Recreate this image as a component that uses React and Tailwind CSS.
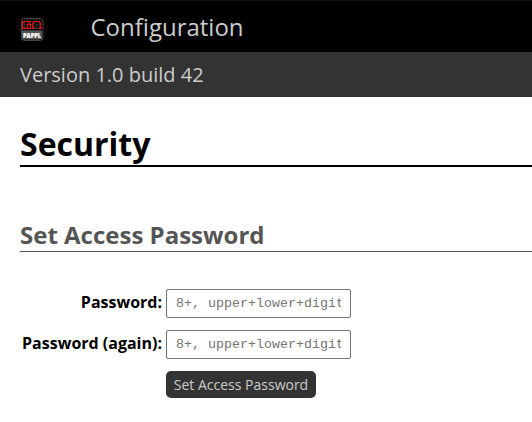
export default function App() {
  return (
    <div className="h-[422px] w-[532px] overflow-hidden bg-white font-['Open_Sans','Noto_Sans',sans-serif] text-black">
      <header className="flex h-[52px] items-center border-t border-[#111] bg-black pl-5 text-[#ccc]">
        <svg className="mt-[7px] size-6" viewBox="0 0 24 24">
          <rect x="1.5" y="0.5" width="21.5" height="22" rx="3" fill="#000" stroke="#555" strokeWidth="0.8" />
          <path d="M4.5 0v23M7.5 0v23M10.5 0v23M13.5 0v23M16.5 0v23M19.5 0v23M1 3.5h22M1 6.5h22M1 9.5h22" stroke="#444" strokeWidth="0.5" />
          <path d="M2.5 11V3M2.5 4.5h3M5.5 3.5h5M9.5 3.5v3M2 10.5h8.5v-4h-3v4M12.5 10.5v-5l2-2h4l2 2v5M12 10.5h3M18 10.5h4" fill="none" stroke="#f00" strokeWidth="1.1" />
          <rect x="2" y="12.5" width="20" height="9" fill="#555" />
          <text x="12" y="19.5" textAnchor="middle" fontSize="6.2" fontWeight="800" fill="#fff" stroke="#fff" strokeWidth="0.2" textLength="18" lengthAdjust="spacingAndGlyphs">PAPPL</text>
        </svg>
        <span className="ml-[46.5px] mt-px text-2xl">Configuration</span>
      </header>
      <div className="flex h-[45px] items-center bg-[#333] pl-5 text-[20px] text-[#ccc]">Version 1.0 build 42</div>
      <main className="pl-5">
        <h1 className="mt-[25px] h-[45px] border-b-2 border-black text-[32px] leading-[43px] font-bold">Security</h1>
        <h2 className="mt-[52px] h-[33px] border-b border-[#555] text-2xl leading-[32px] font-bold text-[#555]">Set Access Password</h2>
        <form className="mt-[37px] grid grid-cols-[142px_185px] gap-x-1 gap-y-3">
          <label className="text-right text-base leading-[26px] font-bold whitespace-nowrap">Password:</label>
          <input className="h-[29px] rounded-xs border border-[#767676] px-[9px] font-['Liberation_Mono',monospace] text-[13.333px] placeholder:text-[#757575]" placeholder="8+, upper+lower+digit" />
          <label className="text-right text-base leading-[26px] font-bold whitespace-nowrap">Password (again):</label>
          <input className="h-[29px] rounded-xs border border-[#767676] px-[9px] font-['Liberation_Mono',monospace] text-[13.333px] placeholder:text-[#757575]" placeholder="8+, upper+lower+digit" />
          <button type="button" className="col-start-2 h-[27px] w-[150px] rounded-[5px] bg-[#333] text-sm text-[#ccc]">Set Access Password</button>
        </form>
      </main>
    </div>
  );
}
